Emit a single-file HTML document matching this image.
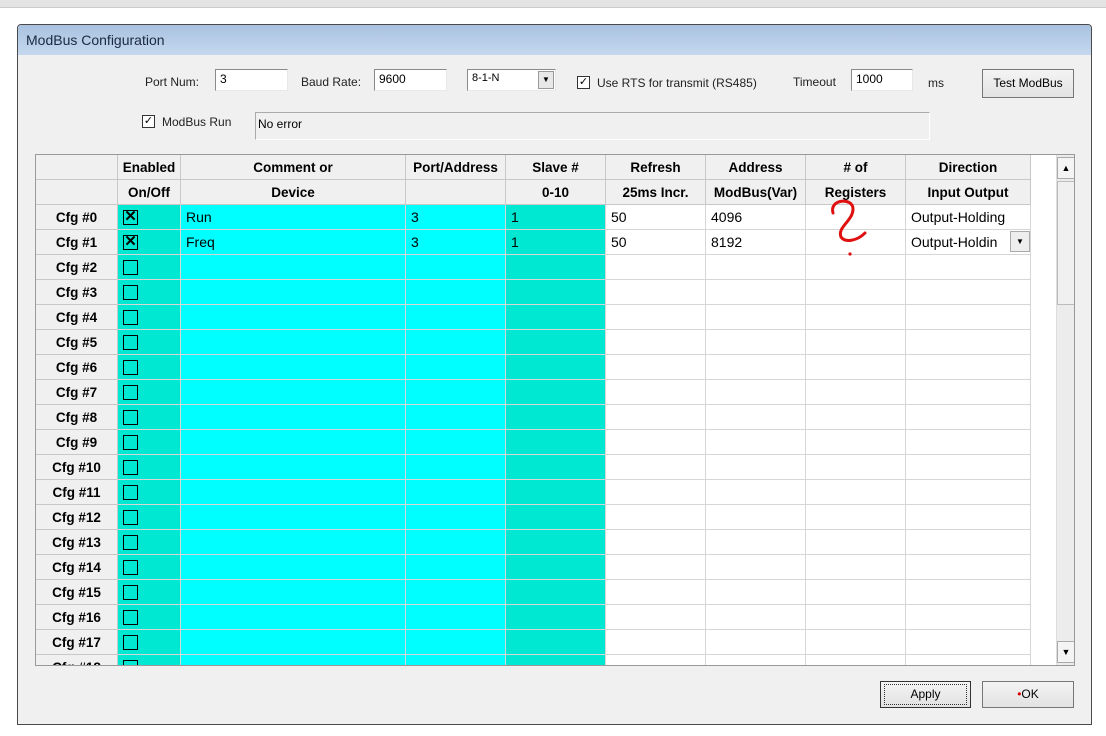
<!DOCTYPE html>
<html><head><style>
*{box-sizing:border-box;margin:0;padding:0}
body{width:1106px;height:736px;background:#fff;position:relative;overflow:hidden;font-family:"Liberation Sans",sans-serif;font-size:12px;color:#000}
.abs{position:absolute}
#outer{left:0;top:0;width:1106px;height:8px;background:#e4e4e4;border-bottom:1px solid #ccc}
#dlg{left:17px;top:24px;width:1075px;height:701px;border:1px solid #4a4a4a;border-radius:4px 4px 0 0;background:#f0f0f0;overflow:hidden}
#title{left:0;top:0;width:100%;height:30px;background:linear-gradient(#a9c2e0,#c5d8ee);font-size:14px;color:#1a2a40;padding:7px 0 0 8px}
.lbl{font-size:12px;color:#222}
.inp{background:#fff;border:1px solid #8a8a8a;border-right-color:#e8e8e8;border-bottom-color:#e8e8e8;font-size:12px;padding:2px 4px}
.btn{background:linear-gradient(#f4f4f4,#e2e2e2);border:1px solid #777;font-size:12px;text-align:center}
.cb{width:13px;height:13px;border:1px solid #333;background:#fff;font-size:11px;line-height:11px;text-align:center}
table{border-collapse:collapse;table-layout:fixed}
td{height:25px;border:1px solid #d6d6d6;font-size:14px;padding:0 5px;white-space:nowrap;overflow:hidden}
th{height:25px;border:1px solid #c8c8c8;background:#f0f0f0;font-size:13.5px;font-weight:bold;white-space:nowrap;overflow:hidden}
td.rh{background:#f0f0f0;text-align:center;font-weight:bold;font-size:13.5px;border-color:#c8c8c8}
.t{background:#00e8d2}.c{background:#00ffff}.w{background:#fff}
.box{display:inline-block;width:15px;height:15px;border:1.5px solid #000;vertical-align:middle;text-align:center;line-height:12px;font-size:15px;font-weight:bold}
</style></head><body>
<div class="abs" id="outer"></div>
<div class="abs" id="dlg">
<div class="abs" id="title">ModBus Configuration</div>
<div class="abs lbl" style="left:127px;top:50px">Port Num:</div>
<div class="abs inp" style="left:197px;top:44px;width:73px;height:22px">3</div>
<div class="abs lbl" style="left:283px;top:50px">Baud Rate:</div>
<div class="abs inp" style="left:356px;top:44px;width:73px;height:22px">9600</div>
<div class="abs inp" style="left:449px;top:44px;width:89px;height:22px;font-size:11px">8-1-N<span class="abs" style="right:1px;top:1px;width:16px;height:18px;background:#e8e8e8;border:1px solid #999;font-size:8px;text-align:center;line-height:16px">▼</span></div>
<div class="abs cb" style="left:559px;top:51px">✓</div>
<div class="abs lbl" style="left:579px;top:51px">Use RTS for transmit (RS485)</div>
<div class="abs lbl" style="left:775px;top:50px">Timeout</div>
<div class="abs inp" style="left:833px;top:44px;width:62px;height:22px">1000</div>
<div class="abs lbl" style="left:910px;top:51px">ms</div>
<div class="abs btn" style="left:964px;top:44px;width:92px;height:29px;line-height:27px">Test ModBus</div>
<div class="abs cb" style="left:124px;top:90px">✓</div>
<div class="abs lbl" style="left:144px;top:90px">ModBus Run</div>
<div class="abs" style="left:237px;top:87px;width:675px;height:28px;border:1px solid #aaa;border-right-color:#fff;border-bottom-color:#fff;padding:4px 2px">No error</div>
<div class="abs" style="left:17px;top:129px;width:1040px;height:512px;background:#fff;border:1px solid #999;overflow:hidden">
<table style="width:994px;margin:-1px 0 0 -1px">
<colgroup><col style="width:82px"><col style="width:63px"><col style="width:225px"><col style="width:100px"><col style="width:100px"><col style="width:100px"><col style="width:100px"><col style="width:100px"><col style="width:125px"></colgroup>
<tr><th></th><th>Enabled</th><th>Comment or</th><th>Port/Address</th><th>Slave #</th><th>Refresh</th><th>Address</th><th># of</th><th>Direction</th></tr>
<tr><th></th><th>On/Off</th><th>Device</th><th></th><th>0-10</th><th>25ms Incr.</th><th>ModBus(Var)</th><th>Registers</th><th>Input Output</th></tr>
<tr><td class="rh">Cfg #0</td><td class="t"><span class="box">✕</span></td><td class="c">Run</td><td class="c">3</td><td class="t">1</td><td class="w">50</td><td class="w">4096</td><td class="w"></td><td class="w">Output-Holding</td></tr>
<tr><td class="rh">Cfg #1</td><td class="t"><span class="box">✕</span></td><td class="c">Freq</td><td class="c">3</td><td class="t">1</td><td class="w">50</td><td class="w">8192</td><td class="w"></td><td class="w" style="position:relative">Output-Holdin<span style="position:absolute;right:0;top:1px;width:20px;height:21px;background:#eee;border:1px solid #aaa;font-size:8px;text-align:center;line-height:19px">▼</span></td></tr>
<tr><td class="rh">Cfg #2</td><td class="t"><span class="box"></span></td><td class="c"></td><td class="c"></td><td class="t"></td><td></td><td></td><td></td><td></td></tr>
<tr><td class="rh">Cfg #3</td><td class="t"><span class="box"></span></td><td class="c"></td><td class="c"></td><td class="t"></td><td></td><td></td><td></td><td></td></tr>
<tr><td class="rh">Cfg #4</td><td class="t"><span class="box"></span></td><td class="c"></td><td class="c"></td><td class="t"></td><td></td><td></td><td></td><td></td></tr>
<tr><td class="rh">Cfg #5</td><td class="t"><span class="box"></span></td><td class="c"></td><td class="c"></td><td class="t"></td><td></td><td></td><td></td><td></td></tr>
<tr><td class="rh">Cfg #6</td><td class="t"><span class="box"></span></td><td class="c"></td><td class="c"></td><td class="t"></td><td></td><td></td><td></td><td></td></tr>
<tr><td class="rh">Cfg #7</td><td class="t"><span class="box"></span></td><td class="c"></td><td class="c"></td><td class="t"></td><td></td><td></td><td></td><td></td></tr>
<tr><td class="rh">Cfg #8</td><td class="t"><span class="box"></span></td><td class="c"></td><td class="c"></td><td class="t"></td><td></td><td></td><td></td><td></td></tr>
<tr><td class="rh">Cfg #9</td><td class="t"><span class="box"></span></td><td class="c"></td><td class="c"></td><td class="t"></td><td></td><td></td><td></td><td></td></tr>
<tr><td class="rh">Cfg #10</td><td class="t"><span class="box"></span></td><td class="c"></td><td class="c"></td><td class="t"></td><td></td><td></td><td></td><td></td></tr>
<tr><td class="rh">Cfg #11</td><td class="t"><span class="box"></span></td><td class="c"></td><td class="c"></td><td class="t"></td><td></td><td></td><td></td><td></td></tr>
<tr><td class="rh">Cfg #12</td><td class="t"><span class="box"></span></td><td class="c"></td><td class="c"></td><td class="t"></td><td></td><td></td><td></td><td></td></tr>
<tr><td class="rh">Cfg #13</td><td class="t"><span class="box"></span></td><td class="c"></td><td class="c"></td><td class="t"></td><td></td><td></td><td></td><td></td></tr>
<tr><td class="rh">Cfg #14</td><td class="t"><span class="box"></span></td><td class="c"></td><td class="c"></td><td class="t"></td><td></td><td></td><td></td><td></td></tr>
<tr><td class="rh">Cfg #15</td><td class="t"><span class="box"></span></td><td class="c"></td><td class="c"></td><td class="t"></td><td></td><td></td><td></td><td></td></tr>
<tr><td class="rh">Cfg #16</td><td class="t"><span class="box"></span></td><td class="c"></td><td class="c"></td><td class="t"></td><td></td><td></td><td></td><td></td></tr>
<tr><td class="rh">Cfg #17</td><td class="t"><span class="box"></span></td><td class="c"></td><td class="c"></td><td class="t"></td><td></td><td></td><td></td><td></td></tr>
<tr><td class="rh">Cfg #18</td><td class="t"><span class="box"></span></td><td class="c"></td><td class="c"></td><td class="t"></td><td></td><td></td><td></td><td></td></tr>
</table>
<div class="abs" style="left:1020px;top:0;width:19px;height:512px;background:#ececec;border-left:1px solid #ddd">
<div class="abs" style="left:0;top:2px;width:18px;height:22px;background:#f4f4f4;border:1px solid #aaa;font-size:9px;text-align:center;line-height:20px">▲</div>
<div class="abs" style="left:0;top:26px;width:18px;height:124px;background:#f0f0f0;border:1px solid #bbb"></div>
<div class="abs" style="left:0;top:486px;width:18px;height:22px;background:#f4f4f4;border:1px solid #aaa;font-size:9px;text-align:center;line-height:20px">▼</div>
</div>
</div>
<svg class="abs" style="left:0;top:0" width="1075" height="701"><path d="M815 188 C811 174,835 172,835 184 C835 196,819 202,823 212 C827 218,839 216,847 208" stroke="#e01010" stroke-width="3" fill="none" stroke-linecap="round"/><circle cx="832" cy="229" r="1.6" fill="#e01010"/></svg>
<div class="abs btn" style="left:862px;top:656px;width:91px;height:27px;line-height:25px;border-color:#333"><span style="display:inline-block;border:1px dotted #333;width:83px;line-height:19px;margin-top:2px">Apply</span></div>
<div class="abs btn" style="left:964px;top:656px;width:92px;height:27px;line-height:25px"><span style="color:#d00">•</span>OK</div>
</div>
</body></html>
